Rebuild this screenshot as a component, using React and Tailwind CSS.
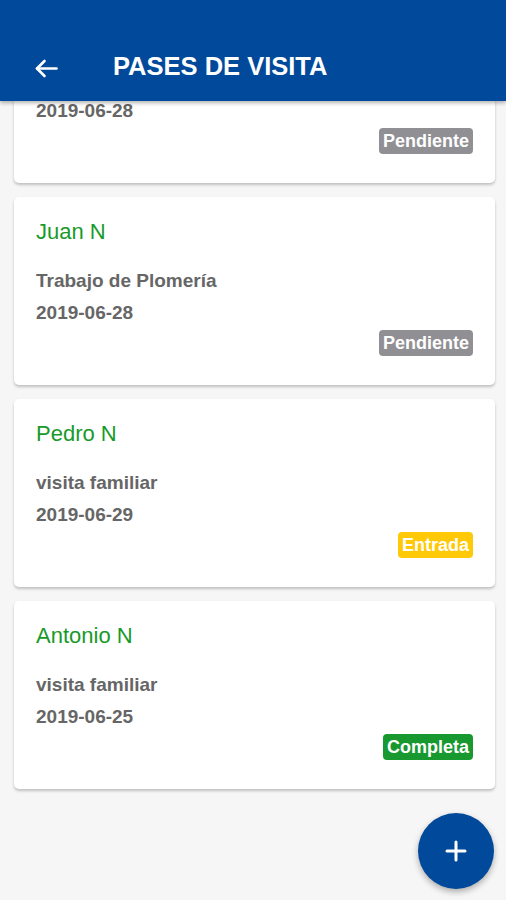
import React from 'react';

const passes = [
  { name: 'María N', desc: 'visita familiar', date: '2019-06-28', status: 'Pendiente', hidden: true },
  { name: 'Juan N', desc: 'Trabajo de Plomería', date: '2019-06-28', status: 'Pendiente' },
  { name: 'Pedro N', desc: 'visita familiar', date: '2019-06-29', status: 'Entrada' },
  { name: 'Antonio N', desc: 'visita familiar', date: '2019-06-25', status: 'Completa' },
];

const badgeColors = {
  Pendiente: 'bg-[#8f8f94]',
  Entrada: 'bg-[#ffc907]',
  Completa: 'bg-[#17992f]',
};

function PassCard({ pass }) {
  // first card is scrolled under the app bar, its top lines can't be seen
  const under = pass.hidden ? 'invisible' : '';
  return (
    <div className="ml-[14px] w-[481px] rounded-[5px] bg-white px-[22px] pt-[22px] pb-[29px] shadow-[0_2px_3px_rgba(0,0,0,0.22)]">
      <p className={`h-[26px] text-[22px] leading-[26px] text-[#189a2a] ${under}`}>{pass.name}</p>
      <p className={`mt-[25px] h-[22px] text-[19px] font-bold leading-[22px] text-[#666666] ${under}`}>{pass.desc}</p>
      <p className="mt-[10px] h-[22px] text-[19px] font-bold leading-[22px] text-[#666666]">{pass.date}</p>
      <div className="mt-[6px] flex justify-end">
        <span
          className={`h-[26px] rounded-[4px] px-[4px] text-[18px] font-bold leading-[26px] text-white ${badgeColors[pass.status]}`}
        >
          {pass.status}
        </span>
      </div>
    </div>
  );
}

export default function App() {
  return (
    <div
      className="relative h-[900px] w-[506px] overflow-hidden bg-[#f6f6f6]"
      style={{ fontFamily: '"Liberation Sans", Arial, sans-serif' }}
    >
      {/* scrolled list */}
      <div className="mt-[-5px] flex flex-col gap-[14px]">
        {passes.map((p, i) => (
          <PassCard key={i} pass={p} />
        ))}
      </div>

      {/* app bar over the list */}
      <header className="absolute left-0 top-0 flex h-[101px] w-full items-end bg-[#01499a] pb-[21px] shadow-[0_2px_4px_rgba(0,0,0,0.3)]">
        <button aria-label="Volver" className="ml-[35px] mb-[2px] flex h-[20px] w-[24px] items-center">
          <svg width="23" height="19" viewBox="0 0 23 19" fill="none" stroke="white" strokeWidth="2.6" strokeLinecap="round" strokeLinejoin="round">
            <path d="M21.5 9.5H2" />
            <path d="M9.5 2L2 9.5L9.5 17" />
          </svg>
        </button>
        <h1 className="ml-[54px] text-[25.5px] font-bold leading-[28px] text-white">PASES DE VISITA</h1>
      </header>

      {/* floating add button */}
      <button
        aria-label="Agregar"
        className="absolute bottom-[11px] right-[12px] flex h-[76px] w-[76px] items-center justify-center rounded-full bg-[#01499a] shadow-[0_3px_6px_rgba(0,0,0,0.3)]"
      >
        <svg width="22" height="22" viewBox="0 0 22 22" stroke="white" strokeWidth="3" strokeLinecap="round">
          <path d="M11 2v18M2 11h18" />
        </svg>
      </button>
    </div>
  );
}
